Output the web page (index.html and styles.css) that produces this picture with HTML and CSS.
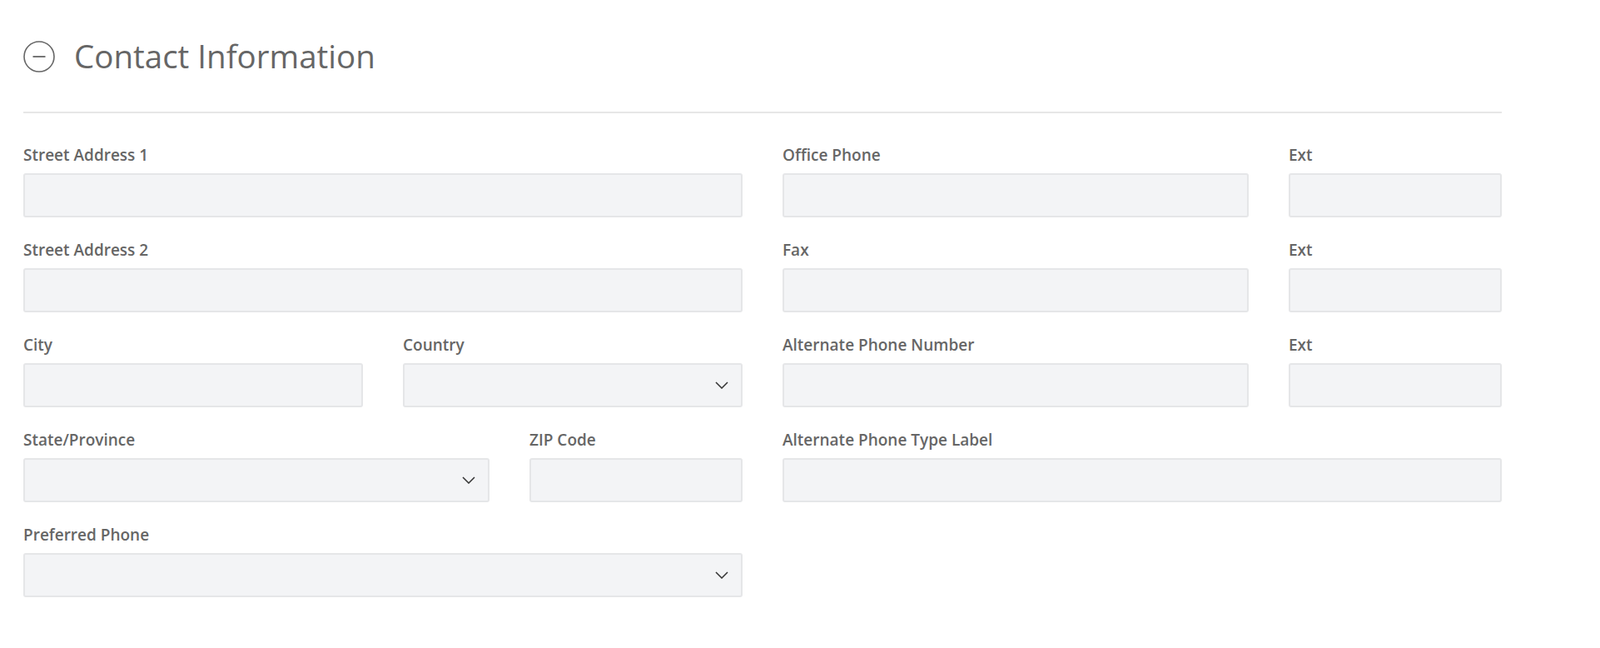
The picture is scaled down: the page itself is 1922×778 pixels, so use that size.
FILE: index.html
```
<!DOCTYPE html>
<html>

<head>
    <title>Contact Information</title>
    <meta name="viewport" content="width=device-width, initial-scale=1.0">
    <link rel="stylesheet" href="styles.css">
</head>

<body>

    <section class="section">
        <div class="section-header">
            <svg class="toggle" width="38" height="38" viewBox="0 0 38 38">
                <circle cx="19" cy="19" r="18" fill="none" stroke="#666" stroke-width="1.6" />
                <line x1="11.5" y1="19" x2="26.5" y2="19" stroke="#666" stroke-width="1.8" />
            </svg>
            <h2>Contact Information</h2>
        </div>

        <form class="grid">
            <!-- first row -->
            <div class="field span-12">
                <label>Street Address 1</label>
                <input type="text">
            </div>
            <div class="field span-8">
                <label>Office Phone</label>
                <input type="text">
            </div>
            <div class="field span-4">
                <label>Ext</label>
                <input type="text">
            </div>
            <!-- second row -->
            <div class="field span-12">
                <label>Street Address 2</label>
                <input type="text">
            </div>
            <div class="field span-8">
                <label>Fax</label>
                <input type="text">
            </div>
            <div class="field span-4">
                <label>Ext</label>
                <input type="text">
            </div>
            <!-- third row -->
            <div class="field span-6">
                <label>City</label>
                <input type="text">
            </div>
            <div class="field span-6">
                <label>Country</label>
                <div class="select">
                    <select></select>
                    <svg class="chevron" width="16" height="9" viewBox="0 0 16 9">
                        <polyline points="1,1 8,8 15,1" fill="none" stroke="#333" stroke-width="1.5" />
                    </svg>
                </div>
            </div>
            <div class="field span-8">
                <label>Alternate Phone Number</label>
                <input type="text">
            </div>
            <div class="field span-4">
                <label>Ext</label>
                <input type="text">
            </div>
            <!-- fourth row -->
            <div class="field span-8">
                <label>State/Province</label>
                <div class="select">
                    <select></select>
                    <svg class="chevron" width="16" height="9" viewBox="0 0 16 9">
                        <polyline points="1,1 8,8 15,1" fill="none" stroke="#333" stroke-width="1.5" />
                    </svg>
                </div>
            </div>
            <div class="field span-4">
                <label>ZIP Code</label>
                <input type="text">
            </div>
            <div class="field span-12">
                <label>Alternate Phone Type Label</label>
                <input type="text">
            </div>
            <!-- fifth row -->
            <div class="field span-12">
                <label>Preferred Phone</label>
                <div class="select">
                    <select></select>
                    <svg class="chevron" width="16" height="9" viewBox="0 0 16 9">
                        <polyline points="1,1 8,8 15,1" fill="none" stroke="#333" stroke-width="1.5" />
                    </svg>
                </div>
            </div>
        </form>
    </section>

</body>

</html>
```

FILE: styles.css
```
body {
    margin: 0;
    font-family: "Open Sans", sans-serif;
    background: white;
}

.section {
    width: 1776px;
    margin-left: 28px;
}

.section-header {
    display: flex;
    align-items: center;
    gap: 23px;
    padding: 41px 0 40px;
    border-bottom: 2px solid #e7e7e7;
}

.toggle {
    display: block;
    flex: none;
}

.section-header h2 {
    margin: 0;
    font-size: 38.5px;
    line-height: 53px;
    font-weight: 400;
    color: #666;
}

.grid {
    display: grid;
    grid-template-columns: repeat(24, 1fr);
    column-gap: 48px;
    row-gap: 25px;
    padding-top: 36px;
}

.span-4 {
    grid-column: span 4;
}

.span-6 {
    grid-column: span 6;
}

.span-8 {
    grid-column: span 8;
}

.span-12 {
    grid-column: span 12;
}

.field label {
    display: block;
    font-size: 19px;
    line-height: 28px;
    font-weight: 600;
    color: #666;
    margin-bottom: 8px;
}

.field input,
.field select {
    display: block;
    box-sizing: border-box;
    width: 100%;
    height: 53px;
    margin: 0;
    padding: 0 16px;
    background: #f3f4f6;
    border: 2px solid #e5e6e8;
    border-radius: 3px;
    font-family: inherit;
    font-size: 18px;
    appearance: none;
    outline: none;
}

.select {
    position: relative;
}

.chevron {
    position: absolute;
    right: 17px;
    top: 22px;
    pointer-events: none;
}
```
